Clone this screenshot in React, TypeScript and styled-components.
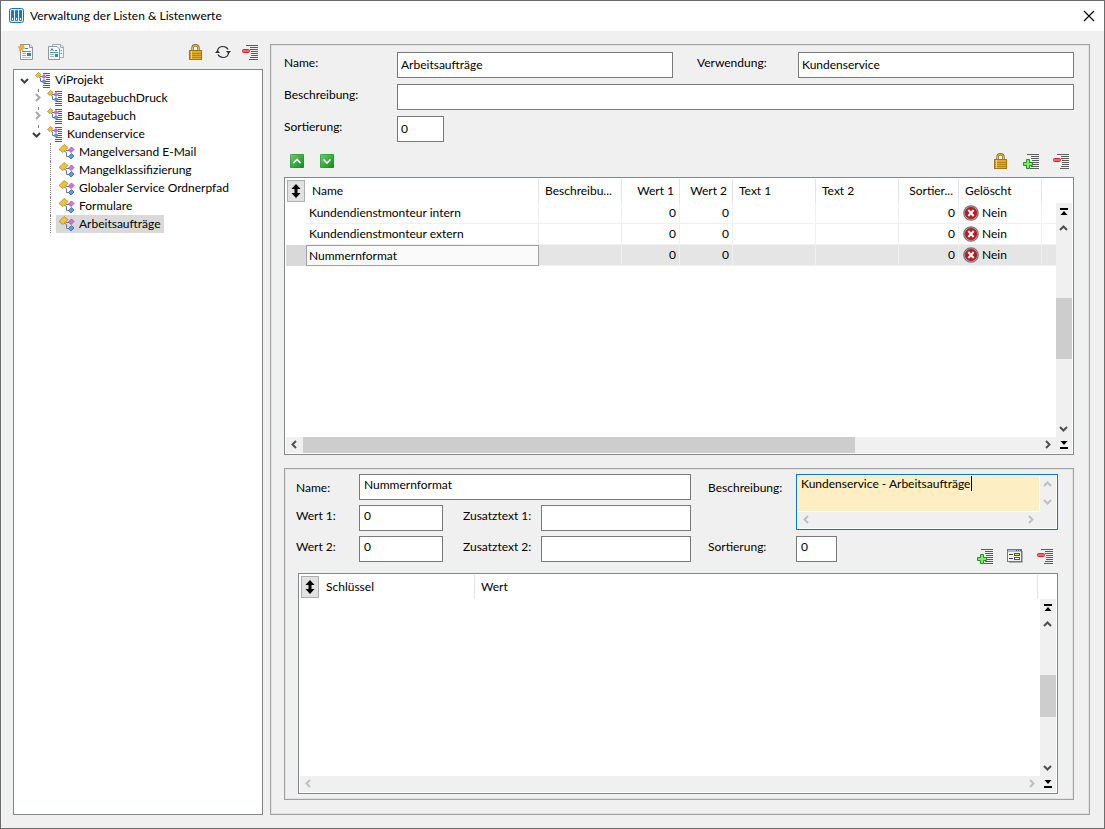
import React from "react";
import styled, { createGlobalStyle, css } from "styled-components";

const Global = createGlobalStyle`
  *, *::before, *::after { box-sizing: border-box; }
  body { margin: 0; background: #f0f0f0; }
  body, input, textarea, button {
    font-family: "Segoe UI", Lato, "Open Sans", sans-serif;
    font-size: 12px;
    line-height: 16px;
    color: #000;
  }
`;

/* ---------- window ---------- */

const Window = styled.div`
  display: flex;
  flex-direction: column;
  min-height: 100vh;
  border: 1px solid #6d6d6d;
  background: #f0f0f0;
`;

const TitleBar = styled.header`
  display: flex;
  align-items: center;
  gap: 5px;
  height: 30px;
  padding: 0 7px 0 8px;
  background: #fff;
`;

const Title = styled.h1`
  flex: 1;
  margin: 0;
  font-size: 12px;
  font-weight: 400;
`;

const IconButton = styled.button`
  display: flex;
  align-items: center;
  justify-content: center;
  width: 16px;
  height: 16px;
  padding: 0;
  border: 0;
  background: none;
`;

const Body = styled.div`
  flex: 1;
  display: flex;
  gap: 7px;
  padding: 13px 14px 13px 12px;
`;

const Side = styled.aside`
  display: flex;
  flex-direction: column;
  gap: 9px;
  width: 250px;
`;

const Toolbar = styled.div`
  display: flex;
  justify-content: space-between;
  height: 16px;
  padding: 0 5px;
`;

const Tools = styled.div<{ $gap?: number }>`
  display: flex;
  gap: ${(p) => p.$gap ?? 14}px;
`;

/* ---------- tree ---------- */

const Tree = styled.ul`
  flex: 1;
  margin: 0;
  padding: 1px 0;
  list-style: none;
  border: 1px solid #828790;
  background: #fff;
`;

const TreeRow = styled.li<{ $level: number }>`
  display: flex;
  height: 18px;
  padding-left: ${(p) => 4 + p.$level * 12}px;
`;

const Expander = styled.span<{ $level: number }>`
  position: relative;
  display: flex;
  align-items: center;
  justify-content: center;
  width: 14px;
  ${(p) =>
    p.$level > 0 &&
    css`
      &::before {
        content: "";
        position: absolute;
        left: 8px;
        top: 0;
        height: ${p.$level === 2 ? "18px" : "2px"};
        border-left: 1px dotted #808080;
      }
    `}
`;

const TreeItem = styled.span<{ $selected?: boolean }>`
  display: flex;
  align-items: center;
  gap: 4px;
  padding: 0 3px;
  background: ${(p) => (p.$selected ? "#d9d9d9" : "transparent")};
`;

/* ---------- panels and forms ---------- */

const Panel = styled.main`
  flex: 1;
  display: flex;
  flex-direction: column;
  min-width: 0;
  padding: 7px 15px 14px 13px;
  border: 1px solid #a0a0a0;
  box-shadow: inset 0 0 0 1px #e3e3e3;
`;

const SubPanel = styled.section`
  flex: 1 1 332px;
  display: flex;
  flex-direction: column;
  gap: 9px;
  margin-top: 13px;
  padding: 5px 15px 5px 11px;
  border: 1px solid #a0a0a0;
  box-shadow: inset 0 0 0 1px #e3e3e3;
`;

const ListForm = styled.form`
  display: grid;
  grid-template-columns: 113px 1fr 125px 1fr;
  row-gap: 6px;
  margin-bottom: 11px;
`;

const ValueForm = styled.form`
  display: grid;
  grid-template-columns: 63px 84px 98px minmax(0, 150fr) 105px minmax(0, 262fr);
  row-gap: 5px;
  align-items: start;
`;

const Label = styled.label<{ $indent?: number; $low?: boolean }>`
  padding: ${(p) => (p.$low ? 6 : 3)}px 0 0 ${(p) => p.$indent ?? 0}px;
`;

const Field = styled.input<{ $span?: number; $width?: number; $raised?: boolean }>`
  grid-column: span ${(p) => p.$span ?? 1};
  width: ${(p) => (p.$width ? `${p.$width}px` : "100%")};
  min-width: 0;
  height: 26px;
  padding: 0 4px ${(p) => (p.$raised ? 5 : 2)}px ${(p) => (p.$raised ? 4 : 3)}px;
  border: 1px solid #7a7a7a;
  border-radius: 0;
  background: #fff;
  outline: none;
`;

const LastCell = styled.div`
  display: flex;
  justify-content: space-between;
  height: 28px;
  padding-right: 5px;
`;

const BottomTools = styled(Tools)`
  align-items: flex-end;
`;

const MemoFrame = styled.div`
  position: relative;
  grid-row: span 2;
  display: grid;
  grid-template: 1fr 16px / 1fr 16px;
  gap: 1px;
  height: 56px;
  padding: 1px;
  border: 1px solid #0078d7;
  background: #fff;
`;

const Memo = styled.textarea`
  display: block;
  width: 100%;
  height: 100%;
  padding: 0 3px;
  border: 0;
  outline: none;
  resize: none;
  overflow: hidden;
  background: #ffeec2;
`;

const Caret = styled.span`
  position: absolute;
  left: 174px;
  top: 1px;
  width: 1px;
  height: 15px;
  background: #000;
`;

/* ---------- grids with scroll bars ---------- */

const GridBox = styled.div<{ $nested?: boolean }>`
  flex: 1 1 ${(p) => (p.$nested ? "221px" : "278px")};
  display: grid;
  grid-template: 1fr 16px / 1fr 16px;
  margin: ${(p) => (p.$nested ? "0 0 0 2px" : "8px 0 0")};
  padding: 1px;
  border: 1px solid #828790;
  background: #fff;
`;

const Table = styled.table`
  width: 100%;
  align-self: start;
  table-layout: fixed;
  border-collapse: separate;
  border-spacing: 0;
`;

const Th = styled.th<{ $right?: boolean }>`
  height: 24px;
  padding: 0 5px 0 6px;
  border-right: 1px solid #e5e5e5;
  font-weight: 400;
  text-align: ${(p) => (p.$right ? "right" : "left")};
  white-space: nowrap;
  &:first-child { padding: 0 0 0 1px; border: 0; }
  &:last-child { padding: 0; border: 0; }
`;

const SortButton = styled.button`
  display: flex;
  align-items: center;
  justify-content: center;
  width: 18px;
  height: 22px;
  padding: 0;
  border: 1px solid #adadad;
  background: #e1e1e1;
`;

const Td = styled.td<{ $right?: boolean }>`
  height: 21px;
  padding: 0 3px;
  border-right: 1px solid #f0f0f0;
  border-bottom: 1px solid #f0f0f0;
  text-align: ${(p) => (p.$right ? "right" : "left")};
  white-space: nowrap;
  &:first-child { border: 0; }
  &:last-child { border-right: 0; }
`;

const Tr = styled.tr<{ $selected?: boolean }>`
  ${(p) =>
    p.$selected &&
    css`
      background: #e5e5e5;
      ${Td}:first-child { background: #d9d9d9; }
      ${Td}:nth-child(2) {
        padding: 0 2px;
        background: #fafafa;
        border: 1px solid #a0a0a0;
      }
    `}
`;

const Deleted = styled.span`
  display: flex;
  align-items: center;
  gap: 3px;
  padding-left: 1px;
`;

const VBar = styled.div<{ $offset?: number }>`
  display: flex;
  flex-direction: column;
  margin-top: ${(p) => p.$offset ?? 0}px;
  background: #f0f0f0;
`;

const HBar = styled.div`
  display: flex;
  background: #f0f0f0;
`;

const MemoCorner = styled.div`
  background: #f0f0f0;
  box-shadow: -1px 0 #f0f0f0, 0 -1px #f0f0f0;
`;

const ScrollButton = styled.button`
  display: flex;
  align-items: center;
  justify-content: center;
  flex: 0 0 17px;
  padding: 0;
  border: 0;
  background: #f0f0f0;
`;

const Gap = styled.div<{ $grow: number }>`
  flex: ${(p) => p.$grow} 1 0;
`;

const Thumb = styled(Gap)`
  background: #cdcdcd;
`;

/* ---------- icons ---------- */

const chevrons = {
  up: "M1 6 L4.500 2.500 L8 6",
  down: "M1 3 L4.500 6.500 L8 3",
  left: "M6 1 L2.500 4.500 L6 8",
  right: "M3 1 L6.500 4.500 L3 8",
};

const Chevron = ({ dir, color = "#505050" }: { dir: keyof typeof chevrons; color?: string }) => {
  const vertical = dir === "up" || dir === "down";
  const w = vertical ? 10 : 9;
  const h = vertical ? 9 : 10;
  return (
    <svg width={w} height={h} viewBox={`0 0 ${w} ${h}`} aria-hidden="true">
      <path d={chevrons[dir]} fill="none" stroke={color} strokeWidth="2" />
    </svg>
  );
};

const AppIcon = () => (
  <svg width="16" height="16" viewBox="0 0 16 16" aria-hidden="true">
    <rect x="0.500" y="0.500" width="14" height="14" rx="2" fill="#e3f0f9" stroke="#2471ae" />
    {[2, 6, 10].map((x) => (
      <g key={x}>
        <rect x={x} y="2" width="3" height="11" rx="1" fill="#1f77b8" />
        <rect x={x + 1} y="10" width="1" height="2" fill="#fff" />
      </g>
    ))}
  </svg>
);

const CloseIcon = () => (
  <svg width="12" height="12" viewBox="0 0 12 12" aria-hidden="true">
    <path d="M1 1 L11 11 M11 1 L1 11" stroke="#000" strokeWidth="1.100" />
  </svg>
);

const NewIcon = () => (
  <svg width="16" height="16" viewBox="0 0 16 16" aria-hidden="true">
    <path d="M2.500 0.500 H12 L14.500 3 V15.500 H2.500 Z" fill="#fbfcfd" stroke="#8f979e" />
    <path d="M11.500 0.500 V3.500 H14.500" fill="#e4e8ec" stroke="#8f979e" />
    <path d="M7 4.500 H10" stroke="#4a7fc4" />
    <path d="M4 7.500 H13" stroke="#3f9fb0" />
    <path d="M4 9.500 H8 M4 11.500 H8" stroke="#9fb0c0" />
    <rect x="9" y="9" width="4" height="3" fill="#3f7fa8" />
    <path d="M4 13.500 H13" stroke="#b4c6da" />
    <path d="M3 0 L4 1.500 L6 1 L5.500 3 L7 4 L5 4.800 L5 7 L3.200 5.600 L1 6.500 L1.600 4.400 L0 3 L2 2.400 Z" fill="#f9b030" stroke="#e0951a" strokeWidth="0.500" />
  </svg>
);

const CopyIcon = () => (
  <svg width="16" height="16" viewBox="0 0 16 16" aria-hidden="true">
    <path d="M4.500 0.500 H13 L15.500 3 V13.500 H4.500 Z" fill="#f2f4f6" stroke="#a3abb2" />
    <path d="M12.500 0.500 V3.500 H15.500" fill="none" stroke="#a3abb2" />
    <path d="M0.500 2.500 H9 L11.500 5 V15.500 H0.500 Z" fill="#fbfcfd" stroke="#8f979e" />
    <path d="M2.500 7 L4 4.500 L5.500 7 M7 6.500 H9" fill="none" stroke="#4a6fc0" />
    <path d="M2 8.500 H10" stroke="#3f9fb0" />
    <path d="M2 10.500 H6 M2 12.500 H6" stroke="#9fb0c0" />
    <rect x="7" y="10" width="3" height="3" fill="#3f7fa8" />
    <path d="M12.500 6.500 H14 M12.500 9.500 H14" stroke="#6a96cc" />
  </svg>
);

const LockIcon = () => (
  <svg width="16" height="16" viewBox="0 0 16 16" aria-hidden="true">
    <path d="M4.500 7 V4 Q4.500 1.300 7.500 1.300 T10.500 4 V7" fill="none" stroke="#8a6d1c" strokeWidth="2.400" />
    <path d="M4.500 7 V4 Q4.500 1.300 7.500 1.300 T10.500 4 V7" fill="none" stroke="#dcc377" strokeWidth="1" />
    <rect x="1.500" y="6.500" width="12" height="9" fill="#e0aa2c" stroke="#a8760e" />
    <path d="M2 9.500 H13 M2 11.500 H13 M2 13.500 H13" stroke="#bd8515" />
    <path d="M3.500 7 V15" stroke="#f3d377" />
  </svg>
);

const RefreshIcon = () => (
  <svg width="16" height="16" viewBox="0 0 16 16" aria-hidden="true">
    <path d="M2.500 7 Q3 2.500 8 2.500 Q11.500 2.500 13 5.500 M13.500 9 Q13 13.500 8 13.500 Q4.500 13.500 3 10.500" fill="none" stroke="#303030" strokeWidth="1.200" />
    <path d="M0 9 L2.500 6 L5 9 Z M11 7 H16 L13.500 10 Z" fill="#303030" />
  </svg>
);

const ListLines = () => (
  <path d="M4 1.500 H16 M8 3.500 H16 M8 5.500 H16 M9 7.500 H16 M9 9.500 H16 M9 11.500 H16 M8 13.500 H16 M7 15.500 H16" stroke="#5c5c5c" />
);

const RemoveIcon = () => (
  <svg width="16" height="16" viewBox="0 0 16 16" aria-hidden="true">
    <ListLines />
    <rect x="0.500" y="5.500" width="7" height="3" rx="1" fill="#f2666b" stroke="#e0262c" />
  </svg>
);

const AddIcon = () => (
  <svg width="16" height="16" viewBox="0 0 16 16" aria-hidden="true">
    <ListLines />
    <path d="M3.500 6.500 H6.500 V9.500 H9.500 V12.500 H6.500 V15.500 H3.500 V12.500 H0.500 V9.500 H3.500 Z" fill="#86e86a" stroke="#149a14" />
  </svg>
);

const DialogIcon = () => (
  <svg width="16" height="16" viewBox="0 0 16 16" aria-hidden="true">
    <path d="M15.500 3 V14.500 H2" fill="none" stroke="#b0b0b0" />
    <rect x="0.500" y="1.500" width="14" height="12" fill="#f3f3ee" stroke="#707880" />
    <rect x="1" y="2" width="13" height="2" fill="#a9bccb" />
    <path d="M9 2.500 H10 M11 2.500 H12 M13 2.500 H14" stroke="#40607c" />
    <path d="M2 6.500 H6 M2 10.500 H6" stroke="#404040" />
    <rect x="7.500" y="5.500" width="5" height="2" fill="#f5e04a" stroke="#505050" />
    <rect x="7.500" y="9.500" width="5" height="2" fill="#fff" stroke="#505050" />
  </svg>
);

const NodeIcon = () => (
  <svg width="16" height="16" viewBox="0 0 16 16" aria-hidden="true">
    <path d="M5 7 L7.500 8.500 V12.500 H10 M7 6.500 H10" fill="none" stroke="#5f7f9f" />
    <path d="M5 0.500 L9 3.500 L4 8.500 L0 5.500 Z" fill="#efc43a" stroke="#b98a14" strokeWidth="0.800" />
    <path d="M12.500 3 L15 5.500 L12 8.500 L9.500 6 Z" fill="#d873dc" stroke="#a03fae" strokeWidth="0.800" />
    <path d="M12.500 9.500 L15 12 L12 15 L9.500 12.500 Z" fill="#5c9cf0" stroke="#2a62b8" strokeWidth="0.800" />
  </svg>
);

const ListNodeIcon = () => (
  <svg width="16" height="16" viewBox="0 0 16 16" aria-hidden="true">
    <path d="M8 1.500 H15 M11 3.500 H15 M11 5.500 H15 M11 7.500 H15 M9 9.500 H15 M9 11.500 H15 M8 13.500 H15 M8 15.500 H15" stroke="#5c5c5c" />
    <path d="M4 5 L5.500 6 V9.500 H8 M5 4.500 H8" fill="none" stroke="#5f7f9f" />
    <path d="M3.500 0.500 L6 2.500 L3 5.500 L0.500 3.500 Z" fill="#efc43a" stroke="#b98a14" strokeWidth="0.800" />
    <path d="M9 2.500 L11 4.500 L9 6.500 L7 4.500 Z" fill="#d873dc" stroke="#a03fae" strokeWidth="0.800" />
    <path d="M9 7.500 L11 9.500 L9 11.500 L7 9.500 Z" fill="#5c9cf0" stroke="#2a62b8" strokeWidth="0.800" />
  </svg>
);

const GreenIcon = ({ dir }: { dir: "up" | "down" }) => (
  <svg width="16" height="16" viewBox="0 0 16 16" aria-hidden="true">
    <defs>
      <linearGradient id={`green-${dir}`} x1="0" y1="0" x2="1" y2="1">
        <stop offset="0" stopColor="#6fd06a" />
        <stop offset="1" stopColor="#0f8a1c" />
      </linearGradient>
    </defs>
    <rect x="1" y="1" width="14" height="14" rx="1" fill={`url(#green-${dir})`} />
    <rect x="1.500" y="1.500" width="13" height="13" rx="1" fill="none" stroke="#1f8f28" strokeOpacity="0.500" />
    <path d={dir === "up" ? "M4.500 10 L8 6.500 L11.500 10" : "M4.500 6.500 L8 10 L11.500 6.500"} fill="none" stroke="#fff" strokeWidth="1.600" />
  </svg>
);

const SortIcon = () => (
  <svg width="10" height="14" viewBox="0 0 10 14" aria-hidden="true">
    <path d="M5 0 L9.500 5 H6.500 V9 H9.500 L5 14 L0.500 9 H3.500 V5 H0.500 Z" fill="#000" />
  </svg>
);

const CrossIcon = () => (
  <svg width="16" height="16" viewBox="0 0 16 16" aria-hidden="true">
    <circle cx="8" cy="8" r="7.200" fill="#b9b9bd" stroke="#77777c" strokeWidth="1.300" />
    <circle cx="8" cy="8" r="5.800" fill="#c4161c" stroke="#8e1014" strokeWidth="0.600" />
    <path d="M5.300 5 L10.700 11 M10.700 5 L5.300 11" stroke="#fff" strokeWidth="2" />
  </svg>
);

const EdgeIcon = ({ end }: { end?: boolean }) => (
  <svg width="8" height="8" viewBox="0 0 8 8" aria-hidden="true">
    <path d={end ? "M0.500 0 H7.500 L4 4 Z M0 6 H8 V8 H0 Z" : "M0 0 H8 V2 H0 Z M4 3 L7.500 7 H0.500 Z"} fill="#000" />
  </svg>
);

/* ---------- data ---------- */

const nodes: { label: string; level: number; open?: boolean; selected?: boolean }[] = [
  { label: "ViProjekt", level: 0, open: true },
  { label: "BautagebuchDruck", level: 1, open: false },
  { label: "Bautagebuch", level: 1, open: false },
  { label: "Kundenservice", level: 1, open: true },
  { label: "Mangelversand E-Mail", level: 2 },
  { label: "Mangelklassifizierung", level: 2 },
  { label: "Globaler Service Ordnerpfad", level: 2 },
  { label: "Formulare", level: 2 },
  { label: "Arbeitsaufträge", level: 2, selected: true },
];

const columns = [
  { title: "Name", width: 233 },
  { title: "Beschreibu...", width: 83 },
  { title: "Wert 1", width: 58, right: true },
  { title: "Wert 2", width: 53, right: true },
  { title: "Text 1", width: 83 },
  { title: "Text 2", width: 83 },
  { title: "Sortier...", width: 60, right: true },
  { title: "Gelöscht", width: 83 },
];

const values = ["Kundendienstmonteur intern", "Kundendienstmonteur extern", "Nummernformat"];

/* ---------- composite parts ---------- */

const Tool = ({ label, children }: { label: string; children: React.ReactNode }) => (
  <IconButton type="button" aria-label={label} title={label}>
    {children}
  </IconButton>
);

const VerticalScroll = () => (
  <VBar $offset={24}>
    <ScrollButton type="button" aria-label="Zum Anfang"><EdgeIcon /></ScrollButton>
    <ScrollButton type="button" aria-label="Nach oben"><Chevron dir="up" /></ScrollButton>
    <Gap $grow={1} />
    <Thumb $grow={1} />
    <Gap $grow={1} />
    <ScrollButton type="button" aria-label="Nach unten"><Chevron dir="down" /></ScrollButton>
  </VBar>
);

const HorizontalScroll = ({ thumb }: { thumb?: boolean }) => {
  const color = thumb ? "#505050" : "#bfbfbf";
  return (
    <HBar>
      <ScrollButton type="button" aria-label="Nach links" disabled={!thumb}><Chevron dir="left" color={color} /></ScrollButton>
      {thumb && <Thumb $grow={3} />}
      <Gap $grow={1} />
      <ScrollButton type="button" aria-label="Nach rechts" disabled={!thumb}><Chevron dir="right" color={color} /></ScrollButton>
    </HBar>
  );
};

const EndCorner = () => (
  <ScrollButton type="button" aria-label="Zum Ende"><EdgeIcon end /></ScrollButton>
);

export default function App() {
  return (
    <>
      <Global />
      <Window>
        <TitleBar>
          <AppIcon />
          <Title>Verwaltung der Listen &amp; Listenwerte</Title>
          <Tool label="Schließen"><CloseIcon /></Tool>
        </TitleBar>
        <Body>
          <Side>
            <Toolbar>
              <Tools>
                <Tool label="Neu"><NewIcon /></Tool>
                <Tool label="Kopieren"><CopyIcon /></Tool>
              </Tools>
              <Tools $gap={11}>
                <Tool label="Sperren"><LockIcon /></Tool>
                <Tool label="Aktualisieren"><RefreshIcon /></Tool>
                <Tool label="Entfernen"><RemoveIcon /></Tool>
              </Tools>
            </Toolbar>
            <Tree role="tree">
              {nodes.map((n) => (
                <TreeRow key={n.label} $level={n.level} role="treeitem" aria-level={n.level + 1} aria-expanded={n.open} aria-selected={!!n.selected}>
                  <Expander $level={n.level}>
                    {n.open !== undefined && <Chevron dir={n.open ? "down" : "right"} color={n.open ? "#404040" : "#a6a6a6"} />}
                  </Expander>
                  <TreeItem $selected={n.selected}>
                    {n.level < 2 ? <ListNodeIcon /> : <NodeIcon />}
                    {n.label}
                  </TreeItem>
                </TreeRow>
              ))}
            </Tree>
          </Side>

          <Panel>
            <ListForm>
              <Label htmlFor="list-name">Name:</Label>
              <Field id="list-name" defaultValue="Arbeitsaufträge" />
              <Label htmlFor="list-usage" $indent={24}>Verwendung:</Label>
              <Field id="list-usage" defaultValue="Kundenservice" />
              <Label htmlFor="list-text">Beschreibung:</Label>
              <Field id="list-text" $span={3} />
              <Label htmlFor="list-sort">Sortierung:</Label>
              <Field id="list-sort" $width={47} defaultValue="0" />
            </ListForm>
            <Toolbar>
              <Tools>
                <Tool label="Aufwärts"><GreenIcon dir="up" /></Tool>
                <Tool label="Abwärts"><GreenIcon dir="down" /></Tool>
              </Tools>
              <Tools>
                <Tool label="Wert sperren"><LockIcon /></Tool>
                <Tool label="Wert hinzufügen"><AddIcon /></Tool>
                <Tool label="Wert entfernen"><RemoveIcon /></Tool>
              </Tools>
            </Toolbar>
            <GridBox>
              <Table>
                <colgroup>
                  <col style={{ width: 20 }} />
                  {columns.map((c) => <col key={c.title} style={{ width: c.width }} />)}
                  <col />
                </colgroup>
                <thead>
                  <tr>
                    <Th><SortButton type="button" aria-label="Sortieren"><SortIcon /></SortButton></Th>
                    {columns.map((c) => <Th key={c.title} $right={c.right}>{c.title}</Th>)}
                    <Th />
                  </tr>
                </thead>
                <tbody>
                  {values.map((name, i) => (
                    <Tr key={name} $selected={i === 2}>
                      <Td />
                      <Td>{name}</Td>
                      <Td />
                      <Td $right>0</Td>
                      <Td $right>0</Td>
                      <Td />
                      <Td />
                      <Td $right>0</Td>
                      <Td><Deleted><CrossIcon />Nein</Deleted></Td>
                      <Td />
                    </Tr>
                  ))}
                </tbody>
              </Table>
              <VerticalScroll />
              <HorizontalScroll thumb />
              <EndCorner />
            </GridBox>

            <SubPanel>
              <ValueForm>
                <Label htmlFor="value-name" $low>Name:</Label>
                <Field id="value-name" $span={3} $raised defaultValue="Nummernformat" />
                <Label htmlFor="value-text" $indent={17} $low>Beschreibung:</Label>
                <MemoFrame>
                  <Memo id="value-text" defaultValue="Kundenservice - Arbeitsaufträge" />
                  <VBar>
                    <ScrollButton type="button" aria-label="Nach oben" disabled><Chevron dir="up" color="#bfbfbf" /></ScrollButton>
                    <ScrollButton type="button" aria-label="Nach unten" disabled><Chevron dir="down" color="#bfbfbf" /></ScrollButton>
                  </VBar>
                  <HorizontalScroll />
                  <MemoCorner />
                  <Caret />
                </MemoFrame>

                <Label htmlFor="value-1">Wert 1:</Label>
                <Field id="value-1" $raised defaultValue="0" />
                <Label htmlFor="extra-1" $indent={20}>Zusatztext 1:</Label>
                <Field id="extra-1" $raised />
                <span />

                <Label htmlFor="value-2">Wert 2:</Label>
                <Field id="value-2" $raised defaultValue="0" />
                <Label htmlFor="extra-2" $indent={20}>Zusatztext 2:</Label>
                <Field id="extra-2" $raised />
                <Label htmlFor="value-sort" $indent={17}>Sortierung:</Label>
                <LastCell>
                  <Field id="value-sort" $width={41} $raised defaultValue="0" />
                  <BottomTools>
                    <Tool label="Schlüssel hinzufügen"><AddIcon /></Tool>
                    <Tool label="Schlüssel bearbeiten"><DialogIcon /></Tool>
                    <Tool label="Schlüssel entfernen"><RemoveIcon /></Tool>
                  </BottomTools>
                </LastCell>
              </ValueForm>
              <GridBox $nested>
                <Table>
                  <colgroup>
                    <col style={{ width: 20 }} />
                    <col style={{ width: 155 }} />
                    <col />
                    <col style={{ width: 2 }} />
                  </colgroup>
                  <thead>
                    <tr>
                      <Th><SortButton type="button" aria-label="Sortieren"><SortIcon /></SortButton></Th>
                      <Th>Schlüssel</Th>
                      <Th>Wert</Th>
                      <Th />
                    </tr>
                  </thead>
                </Table>
                <VerticalScroll />
                <HorizontalScroll />
                <EndCorner />
              </GridBox>
            </SubPanel>
          </Panel>
        </Body>
      </Window>
    </>
  );
}
